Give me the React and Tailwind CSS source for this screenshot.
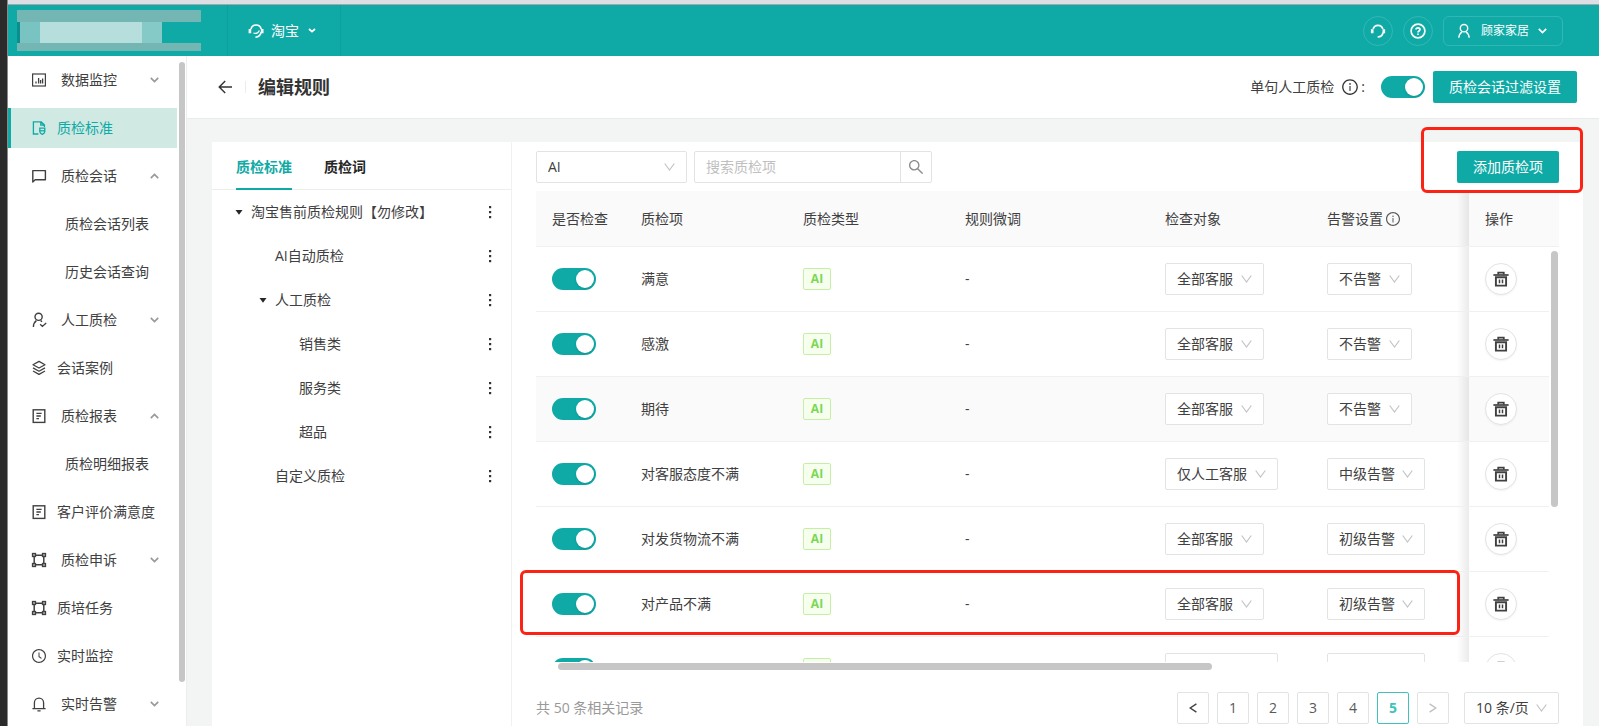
import React from "react";
import {
  AiOutlineSearch,
  AiOutlineInfoCircle,
  AiOutlineClockCircle,
} from "react-icons/ai";

/* ---------- icons ---------- */

function Svg({ size = "size-4", box = 16, width = 1.2, children }) {
  return (
    <svg
      className={`${size} shrink-0`}
      viewBox={`0 0 ${box} ${box}`}
      fill="none"
      stroke="currentColor"
      strokeWidth={width}
      aria-hidden="true"
    >
      {children}
    </svg>
  );
}

const ChartIcon = () => (
  <Svg>
    <rect x="1.6" y="2" width="12.8" height="12" />
    <path d="M5 11.4V9.4M7.6 11.4V6M9.6 11.4V8M11.6 11.4V6.6" strokeWidth="1.3" />
  </Svg>
);
const StandardIcon = () => (
  <Svg width={1.3}>
    <path d="M7.4 14H2.4V1.8h7.4v3.4h3.6V7" />
    <path d="M9.8 1.8l3.6 3.4" strokeWidth="1.8" />
    <path d="M8.8 8.2h5v3.4c0 1.4-1.2 2.2-2.5 2.7-1.3-.5-2.5-1.300-2.500-2.700z" />
    <path d="M8.800 10.800h5" />
  </Svg>
);
const ChatIcon = () => (
  <Svg width={1.4}>
    <path d="M1.8 2.6h12.6v9.200H4.200l-2.400 2.200z" strokeLinejoin="round" />
  </Svg>
);
const PersonCheckIcon = () => (
  <Svg width={1.4}>
    <circle cx="7.600" cy="4.800" r="3.600" />
    <path d="M2.400 15c0-3 1-5 3-6.400M9.600 8.400l1.400 1.400M9.200 12.200l2.200 2.200 3.800-3.400" />
  </Svg>
);
const LayersIcon = () => (
  <Svg width={1.3}>
    <path d="M8 1.4l6 3.3-6 3.3-6-3.3zM2 7.9l6 3.3 6-3.3M2 11l6 3.4L14 11" strokeLinejoin="round" />
  </Svg>
);
const ReportIcon = () => (
  <Svg width={1.4}>
    <rect x="2.2" y="1.8" width="11.6" height="12.6" />
    <path d="M5.400 5.400h5.200M5.400 8h4.400M5.400 10.600h2.600" />
  </Svg>
);
const NodesIcon = () => (
  <Svg width={1.5}>
    <path d="M5 3.2h6M5 12.8h6M3.2 5v6M12.8 5v6" />
    <rect x="1.6" y="1.6" width="2.800" height="2.800" />
    <rect x="11.6" y="1.6" width="2.800" height="2.800" />
    <rect x="1.6" y="11.6" width="2.800" height="2.800" />
    <rect x="11.6" y="11.6" width="2.800" height="2.800" />
  </Svg>
);
const ClockIcon = () => <AiOutlineClockCircle className="size-4 shrink-0" />;
const BellIcon = () => (
  <Svg width={1.3}>
    <path d="M1.4 12.6h13.2M3.4 12.4V6.8a4.6 4.6 0 0 1 9.2 0v5.6M6.4 14.8h3.2" />
  </Svg>
);
const HeadsetIcon = () => (
  <Svg width={1.7}>
    <path d="M3.200 6.200a4.900 4.900 0 0 1 9.600 0" />
    <path d="M13 9.600c-.4 2.600-2 4.200-5.400 4.400" />
    <path d="M2.200 6.200v4M13.800 6.200v4" strokeWidth="2.600" />
  </Svg>
);
const TaobaoHeadset = () => (
  <Svg width={1.6}>
    <path d="M3 6.200a5.200 5.200 0 0 1 10.200 0" />
    <path d="M13.200 8.800c-.4 3.200-2.200 5-5.800 5.400" />
    <path d="M5.400 10c2.600 1 4.800-.2 6-2.600" strokeWidth="1.200" />
    <path d="M1.900 6v4.200M14.200 6v4.200" strokeWidth="2.600" />
  </Svg>
);
const UserIcon = () => (
  <Svg width={1.4}>
    <circle cx="8" cy="5.200" r="3.700" />
    <path d="M2.800 14.800c.2-3 1.400-4.800 3.200-6M13.200 14.800c-.2-3-1.400-4.800-3.200-6" />
  </Svg>
);
const HelpIcon = () => (
  <Svg width={1.7}>
    <circle cx="8" cy="8" r="6.9" />
    <path d="M6 6.600C6 4.200 10 4.200 10 6.600 10 8 8 8 8 9.400M8 10.400v1.700" />
  </Svg>
);
const TrashIcon = () => (
  <svg className="size-4 shrink-0" viewBox="0 0 16 16" fill="none" stroke="currentColor" aria-hidden="true">
    <path d="M.4 4h15.200" strokeWidth="1.700" />
    <path d="M5.200 3.400V1.600h5.600v1.800" strokeWidth="1.700" />
    <path d="M2.900 6.300h10.200v8.300H2.900z" strokeWidth="1.900" />
    <path d="M6.500 8.600v3.600M9.500 8.600v3.600" strokeWidth="1.500" />
  </svg>
);
const BackIcon = () => (
  <Svg width={1.4}>
    <path d="M15 8H2M8.200 2l-6 6 6 6" />
  </Svg>
);
const MoreIcon = () => (
  <svg className="h-4 w-1" viewBox="0 0 4 16" fill="currentColor" aria-hidden="true">
    <rect x="1" y="2" width="2.200" height="2.200" />
    <rect x="1" y="7" width="2.200" height="2.200" />
    <rect x="1" y="12" width="2.200" height="2.200" />
  </svg>
);
const Caret = ({ up }) => (
  <svg
    className={up ? "w-[9px] rotate-180" : "w-[9px]"}
    viewBox="0 0 9 6"
    fill="none"
    stroke="currentColor"
    strokeWidth="1.700"
    aria-hidden="true"
  >
    <path d="M.8 .8l3.700 3.700L8.200 .8" />
  </svg>
);
const SelectArrow = () => (
  <svg
    className="pointer-events-none absolute right-3 top-3 w-[11px] text-[#c4c4c4]"
    viewBox="0 0 11 8"
    fill="none"
    stroke="currentColor"
    strokeWidth="1.200"
    aria-hidden="true"
  >
    <path d="M.7 .5l4.800 6.500L10.300 .5" />
  </svg>
);
const PageArrow = ({ next }) => (
  <svg
    className={next ? "w-2 rotate-180" : "w-2"}
    viewBox="0 0 8 10"
    fill="none"
    stroke="currentColor"
    strokeWidth="1.400"
    aria-hidden="true"
  >
    <path d="M7.400 .8L1.200 5l6.200 4.200" />
  </svg>
);

/* ---------- controls ---------- */

function Toggle({ label, id }) {
  return (
    <input
      id={id}
      type="checkbox"
      role="switch"
      aria-label={label}
      defaultChecked
      className="relative block h-[22px] w-11 shrink-0 cursor-pointer appearance-none rounded-full bg-gray-300 before:absolute before:left-0.5 before:top-0.5 before:size-[18px] before:rounded-full before:bg-white before:shadow-sm checked:bg-[#0faaa6] checked:before:left-6"
    />
  );
}

function Select({ label, value, options, width }) {
  return (
    <div className={`relative ${width}`}>
      <select
        aria-label={label}
        defaultValue={value}
        className="block h-8 w-full appearance-none rounded-xs border border-[#e2e4e4] bg-white pl-[11px] pr-7 text-sm leading-5 text-[#404040] outline-none"
      >
        {options.map((o) => (
          <option key={o}>{o}</option>
        ))}
      </select>
      <SelectArrow />
    </div>
  );
}

/* ---------- data ---------- */

const MENU = [
  { text: "数据监控", icon: ChartIcon, state: "closed" },
  { text: "质检标准", icon: StandardIcon, active: true },
  { text: "质检会话", icon: ChatIcon, state: "open" },
  { text: "质检会话列表", sub: true },
  { text: "历史会话查询", sub: true },
  { text: "人工质检", icon: PersonCheckIcon, state: "closed" },
  { text: "会话案例", icon: LayersIcon },
  { text: "质检报表", icon: ReportIcon, state: "open" },
  { text: "质检明细报表", sub: true },
  { text: "客户评价满意度", icon: ReportIcon },
  { text: "质检申诉", icon: NodesIcon, state: "closed" },
  { text: "质培任务", icon: NodesIcon },
  { text: "实时监控", icon: ClockIcon },
  { text: "实时告警", icon: BellIcon, state: "closed" },
];

const TREE = [
  { text: "淘宝售前质检规则【勿修改】", indent: "pl-[19px]", caret: true },
  { text: "AI自动质检", indent: "pl-[43px]" },
  { text: "人工质检", indent: "pl-[43px]", caret: true },
  { text: "销售类", indent: "pl-[67px]" },
  { text: "服务类", indent: "pl-[67px]" },
  { text: "超品", indent: "pl-[67px]" },
  { text: "自定义质检", indent: "pl-[43px]" },
];

const ROWS = [
  { name: "满意", note: "-", tag: "AI", target: "全部客服", alarm: "不告警" },
  { name: "感激", note: "-", tag: "AI", target: "全部客服", alarm: "不告警" },
  { name: "期待", note: "-", tag: "AI", target: "全部客服", alarm: "不告警", hover: true },
  { name: "对客服态度不满", note: "-", tag: "AI", target: "仅人工客服", alarm: "中级告警" },
  { name: "对发货物流不满", note: "-", tag: "AI", target: "全部客服", alarm: "初级告警" },
  { name: "对产品不满", note: "-", tag: "AI", target: "全部客服", alarm: "初级告警" },
  { name: "", note: "", tag: "", target: "", alarm: "" },
];

const TARGETS = ["全部客服", "仅人工客服"];
const ALARMS = ["不告警", "初级告警", "中级告警", "高级告警"];

/* ---------- sections ---------- */

function TopBar() {
  return (
    <header className="flex h-[51px] shrink-0 items-center bg-[#0faaa6] text-white">
      <div className="flex h-full w-[219px] shrink-0 items-center pl-[9px]">
        <div className="flex h-[41px] w-[184px] flex-col bg-[#73b6b4]">
          <div className="h-3" />
          <div className="flex h-[21px] bg-[#0faaa6]">
            <div className="w-[3px] bg-[#0a8f8e]" />
            <div className="w-5 bg-[#79c3c2]" />
            <div className="w-[102px] bg-[#b5dedd]" />
            <div className="w-5 bg-[#86cac7]" />
          </div>
        </div>
      </div>
      <button className="flex h-full w-[114px] items-center border-x border-[#0c9f9e] pl-5 text-sm">
        <TaobaoHeadset />
        <span className="mx-[7px]">淘宝</span>
        <svg className="ml-0.5 w-2" viewBox="0 0 8 5" fill="none" stroke="currentColor" strokeWidth="1.800" aria-hidden="true">
          <path d="M1 1l3 2.600L7 1" />
        </svg>
      </button>
      <div className="ml-auto flex items-center gap-2.5 pr-9">
        <button aria-label="客服" className="flex size-[30px] items-center justify-center rounded-full border border-white/15">
          <HeadsetIcon />
        </button>
        <button aria-label="帮助" className="flex size-[30px] items-center justify-center rounded-full border border-white/15">
          <HelpIcon />
        </button>
        <button className="flex h-[30px] w-[120px] items-center rounded-md border border-white/15 pl-3 text-xs">
          <UserIcon />
          <span className="mx-[9px]">顾家家居</span>
          <Caret />
        </button>
      </div>
    </header>
  );
}

function Sidebar() {
  return (
    <aside className="flex w-[179px] shrink-0 border-r border-[#eceeee] bg-white">
      <nav className="flex w-[169px] flex-col gap-2 overflow-hidden pt-1">
        {MENU.map(({ text, icon: Icon, state, active, sub }) => (
          <a
            key={text}
            href="#"
            className={
              active
                ? "flex h-10 shrink-0 items-center border-l-3 border-[#0faaa6] bg-[#d1e9e3] pl-5 text-sm text-[#0faaa6]"
                : "flex h-10 shrink-0 items-center pl-[23px] text-sm text-[#404040]"
            }
          >
            {Icon && <Icon />}
            <span className={sub ? "ml-[34px]" : state ? "ml-3.5" : "ml-2.5"}>{text}</span>
            {state && (
              <span className="ml-auto mr-[18px] text-[#999]">
                <Caret up={state === "open"} />
              </span>
            )}
          </a>
        ))}
      </nav>
      <div className="ml-0.5 mt-1.5 mb-11 w-1.5 rounded-full bg-[#c6c6c6]" />
    </aside>
  );
}

function PageHeader() {
  return (
    <div className="flex h-[63px] shrink-0 items-center border-b border-[#e8ebeb] bg-white pl-[30px] pr-[22px]">
      <button aria-label="返回" className="text-[#333]">
        <BackIcon />
      </button>
      <div className="mx-3 h-3 w-px bg-[#ececec]" />
      <h1 className="text-lg font-bold text-[#333]">编辑规则</h1>
      <label htmlFor="manual-check" className="ml-auto flex items-center text-sm text-[#404040]">
        单句人工质检
        <AiOutlineInfoCircle className="ml-[7px] mr-0.5 size-[18px] text-[#333]" />
        <span lang="en">:</span>
      </label>
      <div className="ml-4 mr-2">
        <Toggle id="manual-check" label="单句人工质检" />
      </div>
      <button className="h-8 w-36 rounded-xs bg-[#0faaa6] text-sm text-white">质检会话过滤设置</button>
    </div>
  );
}

function RuleTree() {
  return (
    <section className="w-[300px] shrink-0 border-r border-[#f0f1f1]">
      <div role="tablist" className="flex h-12 gap-8 border-b border-[#eceeee] pl-6 text-sm font-bold">
        <button role="tab" aria-selected="true" className="h-12 border-b-2 border-[#0faaa6] pt-1 text-[#0faaa6]">
          质检标准
        </button>
        <button role="tab" aria-selected="false" className="h-12 border-b-2 border-transparent pt-1 text-[#262626]">
          质检词
        </button>
      </div>
      <ul>
        {TREE.map(({ text, indent, caret }) => (
          <li key={text} className={`flex h-11 items-center pr-[19px] text-sm text-[#404040] ${indent}`}>
            <span className="flex w-5 items-start pl-1">
              {caret && (
                <svg className="w-2" viewBox="0 0 8 5" fill="#262626" aria-hidden="true">
                  <path d="M.5 0h7L4 4.800z" />
                </svg>
              )}
            </span>
            {text}
            <button aria-label={`${text} 更多`} className="ml-auto text-[#333]">
              <MoreIcon />
            </button>
          </li>
        ))}
      </ul>
    </section>
  );
}

function Toolbar() {
  return (
    <div className="flex shrink-0 items-center pt-[9px] pr-6">
      <Select label="质检类型" value="AI" options={["AI"]} width="w-[151px]" />
      <div className="ml-[7px] flex h-8 w-[238px] rounded-xs border border-[#e2e4e4]">
        <input
          type="text"
          aria-label="搜索质检项"
          placeholder="搜索质检项"
          className="min-w-0 flex-1 bg-transparent px-[11px] text-sm outline-none placeholder:text-[#bfbfbf]"
        />
        <button aria-label="搜索" className="flex w-[31px] items-center justify-center border-l border-[#e2e4e4] text-[#8c8c8c]">
          <AiOutlineSearch className="size-[18px]" />
        </button>
      </div>
      <div className="relative ml-auto">
        <button className="h-8 w-[102px] rounded-xs bg-[#0faaa6] text-sm text-white">添加质检项</button>
        <div className="pointer-events-none absolute -left-9 -right-6 -top-6 -bottom-2.5 z-10 rounded-md border-3 border-[#fb2314]" />
      </div>
    </div>
  );
}

function RuleTable() {
  const fixedCell =
    "relative pl-4 text-left before:pointer-events-none before:absolute before:-left-3 before:inset-y-0 before:w-3 before:bg-linear-to-r before:from-transparent before:to-black/8";
  return (
    <div className="relative mt-2 mr-6 min-h-0 flex-1">
      <div className="h-full overflow-hidden">
        <table className="w-full table-fixed border-separate border-spacing-0 text-sm text-[#404040]">
          <colgroup>
            <col className="w-[89px]" />
            <col className="w-[162px]" />
            <col className="w-[162px]" />
            <col />
            <col className="w-[162px]" />
            <col className="w-[158px]" />
            <col className="w-[90px]" />
          </colgroup>
          <thead>
            <tr className="h-14 bg-[#fafafa] text-left [&>th]:border-b [&>th]:border-[#eff0f0] [&>th]:font-normal">
              <th className="pl-4">是否检查</th>
              <th className="pl-4">质检项</th>
              <th className="pl-4">质检类型</th>
              <th className="pl-4">规则微调</th>
              <th className="pl-4">检查对象</th>
              <th className="pl-4">
                <span className="flex items-center">
                  告警设置
                  <AiOutlineInfoCircle className="ml-0.5 size-4 text-[#595959]" />
                </span>
              </th>
              <th className={fixedCell}>操作</th>
            </tr>
          </thead>
          <tbody>
            {ROWS.map((row, i) => (
              <tr
                key={i}
                className={`h-[65px] [&>td]:border-b [&>td]:border-[#eff0f0] ${row.hover ? "bg-[#fafafa]" : ""}`}
              >
                <td className="pl-4">
                  <Toggle label={`是否检查 ${row.name}`} />
                </td>
                <td className="pl-4">{row.name}</td>
                <td className="pl-4">
                  <span className="block h-[22px] w-7 rounded-xs border border-[#c5f0a4] bg-[#f6ffed] text-center text-xs font-bold leading-5 text-[#7bd756]">
                    {row.tag}
                  </span>
                </td>
                <td className="pl-4">{row.note}</td>
                <td className="pl-4">
                  <Select
                    label={`检查对象 ${row.name}`}
                    value={row.target}
                    options={row.target ? TARGETS : [""]}
                    width={row.target === "全部客服" ? "w-[99px]" : "w-[113px]"}
                  />
                </td>
                <td className="pl-4">
                  <Select
                    label={`告警设置 ${row.name}`}
                    value={row.alarm}
                    options={row.alarm ? ALARMS : [""]}
                    width={row.alarm === "不告警" ? "w-[85px]" : "w-[98px]"}
                  />
                </td>
                <td className={fixedCell}>
                  <button
                    aria-label={`删除 ${row.name}`}
                    className="flex size-8 items-center justify-center rounded-full border border-[#e2e4e4] bg-white text-[#404040] shadow-xs"
                  >
                    <TrashIcon />
                  </button>
                </td>
              </tr>
            ))}
          </tbody>
        </table>
      </div>
      <div className="absolute right-0 top-14 bottom-0 w-2.5 bg-white pt-1">
        <div className="ml-0.5 h-64 w-[7px] rounded-full bg-[#c6c6c6]" />
      </div>
      <div className="pointer-events-none absolute -left-4 right-[99px] top-[379px] z-10 h-[65px] rounded-md border-3 border-[#fb2314]" />
    </div>
  );
}

function Pagination() {
  const base = "flex size-8 items-center justify-center rounded-xs border bg-white";
  return (
    <div className="mt-[22px] mb-0.5 flex shrink-0 items-center gap-2 pr-6 text-sm">
      <span className="mr-auto text-[#999]">共 50 条相关记录</span>
      <button aria-label="上一页" className={`${base} border-[#e2e4e4] text-[#404040]`}>
        <PageArrow />
      </button>
      {[1, 2, 3, 4, 5].map((n) => (
        <button
          key={n}
          className={`${base} ${n === 5 ? "border-[#3fc2bb] font-bold text-[#3fc2bb]" : "border-[#e2e4e4] text-[#595959]"}`}
        >
          {n}
        </button>
      ))}
      <button aria-label="下一页" disabled className={`${base} border-[#e2e4e4] text-[#bfbfbf]`}>
        <PageArrow next />
      </button>
      <div className="ml-[7px]">
        <Select label="每页条数" value="10 条/页" options={["10 条/页", "20 条/页", "50 条/页"]} width="w-[95px]" />
      </div>
    </div>
  );
}

export default function App() {
  return (
    <div className="flex h-screen flex-col overflow-hidden bg-[#f3f5f5] font-['Open_Sans','Noto_Sans_CJK_SC',sans-serif] leading-5">
      <div className="flex min-h-0 flex-1">
        <div className="w-2 shrink-0 border-r border-[#8a8a8a] bg-[#2b2b2b]" />
        <div className="flex min-w-0 flex-1 flex-col">
          <div className="h-[5px] shrink-0 border-b border-[#a2a7ab] bg-[#dddfe4]" />
          <TopBar />
          <div className="flex min-h-0 flex-1">
            <Sidebar />
            <main className="flex min-w-0 flex-1 flex-col">
              <PageHeader />
              <div className="ml-[25px] mr-4 mt-[23px] flex min-h-0 flex-1 bg-white">
                <RuleTree />
                <section className="flex min-w-0 flex-1 flex-col pl-6">
                  <Toolbar />
                  <RuleTable />
                  <div className="mt-px ml-[22px] h-[7px] w-5/8 shrink-0 rounded-full bg-[#c6c6c6]" />
                  <Pagination />
                </section>
              </div>
            </main>
          </div>
        </div>
      </div>
    </div>
  );
}
